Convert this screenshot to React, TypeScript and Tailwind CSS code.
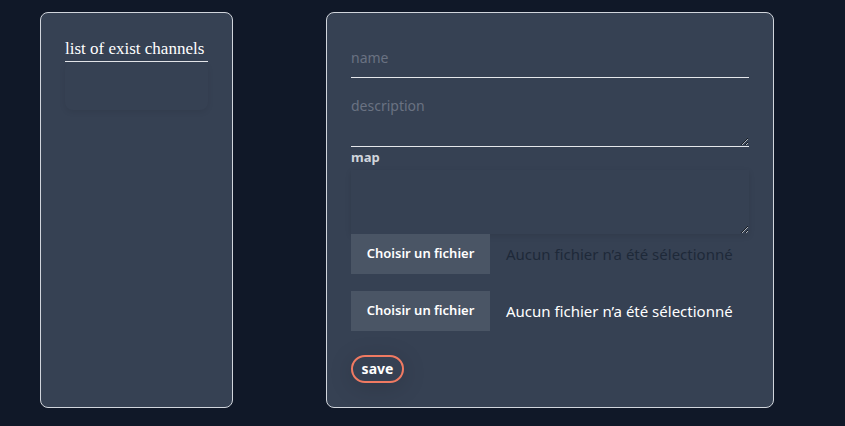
import React from "react";

const sans = "font-['Segoe_UI','Noto_Sans','Open_Sans',sans-serif]";

function FileRow({ muted }: { muted?: boolean }) {
  return (
    <div className="flex h-10 items-center">
      <span className="flex h-10 w-[139px] items-center justify-center bg-gray-600 text-[13px] font-semibold text-white">
        Choisir un fichier
      </span>
      <span
        className={
          "ml-4 text-[15px] " + (muted ? "text-gray-800" : "text-white")
        }
      >
        Aucun fichier n’a été sélectionné
      </span>
    </div>
  );
}

export default function App() {
  return (
    <div className={"min-h-screen bg-gray-900 " + sans}>
      <div className="flex items-start gap-[93px] px-10 pt-3">
        {/* channels list */}
        <aside className="h-[396px] w-[193px] rounded-lg border border-gray-300 bg-gray-700 px-6 pt-6">
          <h2 className="whitespace-nowrap border-b border-gray-200 font-['Liberation_Serif',serif] text-[17px] leading-6 text-white">
            list of exist channels
          </h2>
          <div className="h-12 rounded-lg shadow-[0_2px_6px_rgba(0,0,0,0.08)]" />
        </aside>

        {/* channel form */}
        <form className="h-[396px] w-[448px] rounded-lg border border-gray-300 bg-gray-700 p-6">
          <input
            placeholder="name"
            className="block h-[41px] w-full border-b border-gray-200 bg-transparent text-sm text-white outline-none placeholder:text-gray-500"
          />
          <textarea
            placeholder="description"
            className="mt-2.5 block h-[59px] w-full border-b border-gray-200 bg-transparent py-2 text-sm text-white outline-none placeholder:text-gray-500"
          />
          <label className="mt-0.5 block text-[13px] font-bold leading-4 text-gray-300">
            map
          </label>
          <textarea className="mt-[5px] block h-[64px] w-full bg-transparent shadow-[0_2px_6px_rgba(0,0,0,0.1)] outline-none" />
          <FileRow muted />
          <div className="mt-[17px]">
            <FileRow />
          </div>
          <button
            type="button"
            className="mt-[24px] flex h-[28px] w-[53px] items-center justify-center rounded-full border-2 border-[#f07a62] text-sm font-bold text-white shadow-[0_4px_24px_rgba(0,0,0,0.15)]"
          >
            save
          </button>
        </form>
      </div>
    </div>
  );
}
